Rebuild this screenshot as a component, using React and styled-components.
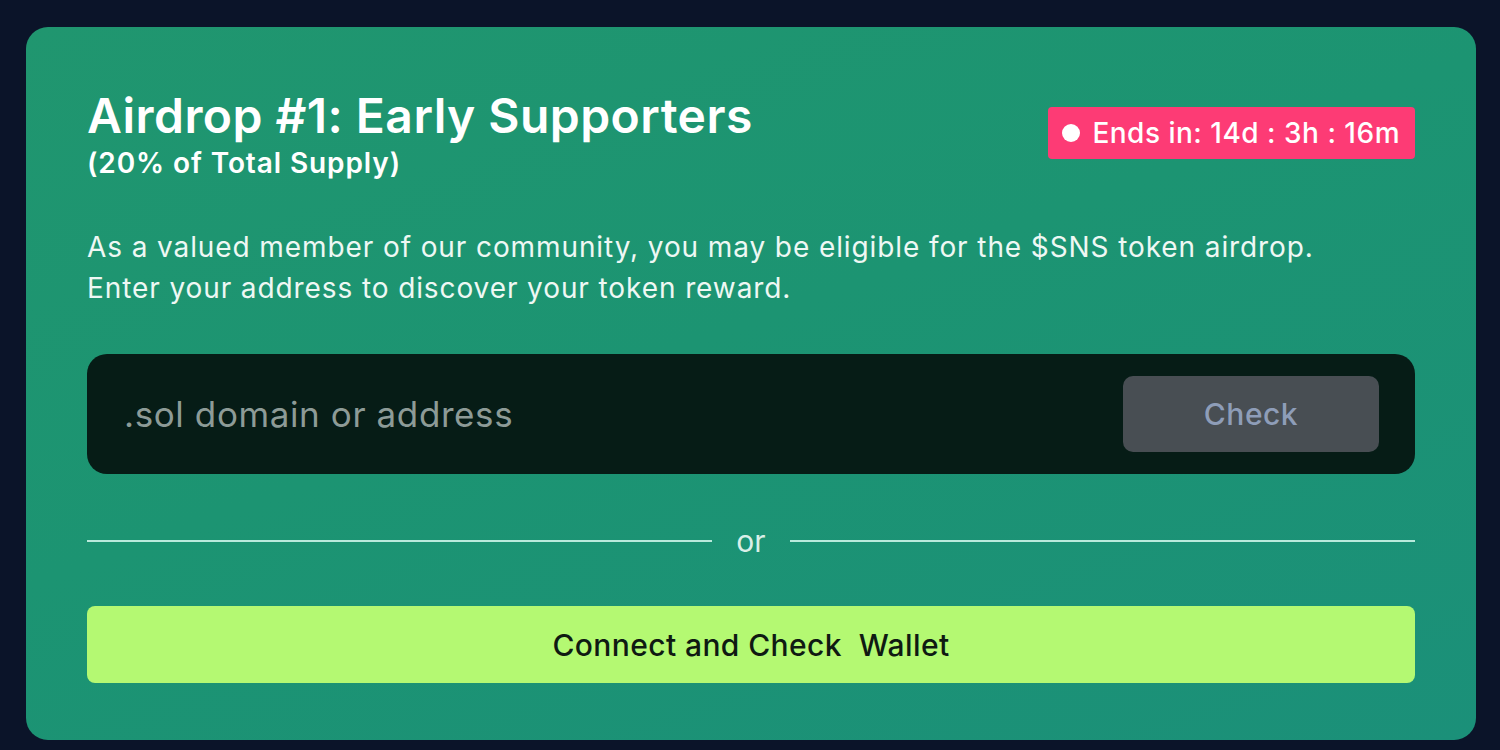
import React from "react";
import styled, { createGlobalStyle } from "styled-components";

const Global = createGlobalStyle`
  html, body { margin: 0; padding: 0; background: #0b1429; }
  body { font-family: Inter, "Noto Sans", sans-serif; }
  * { box-sizing: border-box; }
`;

const Page = styled.div`
  width: 1500px;
  height: 750px;
  padding: 27px 24px 10px 26px;
  background: #0b1429;
`;

const Card = styled.section`
  width: 1450px;
  height: 713px;
  border-radius: 22px;
  background: linear-gradient(160deg, #20966f 0%, #1c9472 45%, #1b9079 100%);
  padding: 60px 61px 0 61px;
  display: flex;
  flex-direction: column;
  color: #fff;
`;

const Header = styled.div`
  display: flex;
  justify-content: space-between;
  align-items: flex-start;
`;

const Titles = styled.div`
  display: flex;
  flex-direction: column;
`;

const Title = styled.h1`
  margin: 0;
  font-size: 48px;
  font-weight: 600;
  letter-spacing: 0.45px;
  line-height: 58px;
`;

const Subtitle = styled.div`
  margin-top: 2px;
  font-size: 28px;
  font-weight: 600;
  line-height: 32px;
  letter-spacing: 0.9px;
`;

const Badge = styled.div`
  margin-top: 20px;
  display: flex;
  align-items: center;
  gap: 12px;
  height: 52px;
  padding: 0 15px 0 14px;
  background: #fd3b75;
  border-radius: 4px;
  font-size: 28px;
  font-weight: 500;
  letter-spacing: 0.5px;
`;

const Dot = styled.span`
  width: 18px;
  height: 18px;
  border-radius: 50%;
  background: #fff;
`;

const Text = styled.p`
  margin: 48px 0 0;
  font-size: 28px;
  line-height: 41px;
  font-weight: 400;
  letter-spacing: 0.9px;
  color: #eef8f4;
`;

const InputBox = styled.div`
  margin-top: 45px;
  height: 120px;
  border-radius: 20px;
  background: #061c16;
  display: flex;
  align-items: center;
  justify-content: space-between;
  padding: 0 36px 0 37px;
`;

const Placeholder = styled.span`
  font-size: 35px;
  color: #8d9b97;
  letter-spacing: 0.6px;
`;

const CheckButton = styled.button`
  width: 256px;
  height: 76px;
  border: none;
  border-radius: 10px;
  background: #484e53;
  color: #8e9db8;
  font-family: inherit;
  font-size: 30px;
  font-weight: 500;
  letter-spacing: 0.5px;
`;

const Divider = styled.div`
  margin-top: 50px;
  display: flex;
  align-items: center;
  gap: 24px;
  height: 34px;
`;

const Line = styled.div`
  flex: 1;
  height: 2px;
  background: #b9eadc;
`;

const Or = styled.span`
  font-size: 30px;
  color: #d9efe8;
  line-height: 34px;
`;

const Connect = styled.button`
  margin-top: 48px;
  height: 77px;
  border: none;
  border-radius: 8px;
  background: #b4f972;
  color: #0f1a12;
  font-family: inherit;
  font-size: 30px;
  font-weight: 500;
  letter-spacing: 0.4px;
  white-space: pre;
`;

export default function App() {
  return (
    <Page>
      <Global />
      <Card>
        <Header>
          <Titles>
            <Title>Airdrop #1: Early Supporters</Title>
            <Subtitle>(20% of Total Supply)</Subtitle>
          </Titles>
          <Badge>
            <Dot />
            Ends in: 14d : 3h : 16m
          </Badge>
        </Header>
        <Text>
          As a valued member of our community, you may be eligible for the $SNS token airdrop.
          <br />
          Enter your address to discover your token reward.
        </Text>
        <InputBox>
          <Placeholder>.sol domain or address</Placeholder>
          <CheckButton>Check</CheckButton>
        </InputBox>
        <Divider>
          <Line />
          <Or>or</Or>
          <Line />
        </Divider>
        <Connect>{"Connect and Check  Wallet"}</Connect>
      </Card>
    </Page>
  );
}
